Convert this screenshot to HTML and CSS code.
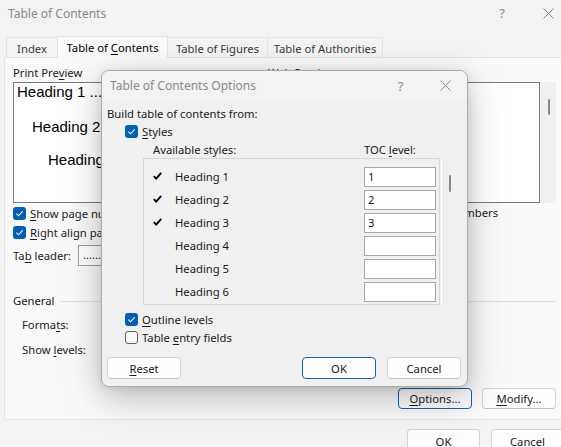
FILE: index.html
```html
<!DOCTYPE html>
<html lang="en">
<head>
<meta charset="utf-8">
<title>Table of Contents</title>
<link rel="stylesheet" href="styles.css">
</head>
<body>
<div class="win">
  <div class="titlebar">
    <span class="title">Table of Contents</span>
    <div class="caps">
      <span class="cap cap-help">?</span>
      <span class="cap cap-close"><svg width="11" height="11" viewBox="0 0 11 11"><path d="M0.5 0.5L10.5 10.5M10.5 0.5L0.5 10.5" stroke="#8a8a8a" stroke-width="1" fill="none"/></svg></span>
    </div>
  </div>
  <div class="tabs">
    <div class="tab t-index"><span>Index</span></div>
    <div class="tab t-toc active"><span>Table of <u>C</u>ontents</span></div>
    <div class="tab t-fig"><span>Table of Figures</span></div>
    <div class="tab t-auth"><span>Table of Authorities</span></div>
  </div>
  <div class="panel">
    <div class="previews">
      <div class="col col-print">
        <div class="label">Print Pre<u>v</u>iew</div>
        <div class="pbox">
          <div class="pl pl1">Heading 1 ..................................................... 1</div>
          <div class="pl pl2">Heading 2 ........................................... 3</div>
          <div class="pl pl3">Heading 3 ...................................... 5</div>
        </div>
        <div class="cb"><span class="box on"><svg width="13" height="13" viewBox="0 0 13 13"><path d="M3.4 6.7L5.5 8.8L9.7 4.3" stroke="#fff" stroke-width="1.1" fill="none"/></svg></span><span><u>S</u>how page numbers</span></div>
        <div class="cb"><span class="box on"><svg width="13" height="13" viewBox="0 0 13 13"><path d="M3.4 6.7L5.5 8.8L9.7 4.3" stroke="#fff" stroke-width="1.1" fill="none"/></svg></span><span><u>R</u>ight align page numbers</span></div>
        <div class="leader"><span class="leader-label">Ta<u>b</u> leader:</span><span class="select">...........</span></div>
      </div>
      <div class="col col-web">
        <div class="label"><u>W</u>eb Preview</div>
        <div class="wbox">
          <div class="wpane"></div>
          <div class="wscroll"><span class="wthumb"></span></div>
        </div>
        <div class="cb"><span class="box on"><svg width="13" height="13" viewBox="0 0 13 13"><path d="M3.4 6.7L5.5 8.8L9.7 4.3" stroke="#fff" stroke-width="1.1" fill="none"/></svg></span><span>Use <u>h</u>yperlinks instead of page numbers</span></div>
      </div>
    </div>
    <div class="general">
      <div class="ghead"><span>General</span><span class="gline"></span></div>
      <div class="grow grow1">Forma<u>t</u>s:</div>
      <div class="grow grow2">Show <u>l</u>evels:</div>
    </div>
    <div class="pbtns">
      <button class="btn def"><span><u>O</u>ptions...</span></button>
      <button class="btn"><span><u>M</u>odify...</span></button>
    </div>
  </div>
  <div class="footer">
    <button class="btn fbtn">OK</button>
    <button class="btn fbtn">Cancel</button>
  </div>
</div>

<div class="dlg">
  <div class="dtitle">
    <span class="title">Table of Contents Options</span>
    <div class="caps">
      <span class="cap dcap-help">?</span>
      <span class="cap dcap-close"><svg width="11" height="11" viewBox="0 0 11 11"><path d="M0.5 0.5L10.5 10.5M10.5 0.5L0.5 10.5" stroke="#8a8a8a" stroke-width="1" fill="none"/></svg></span>
    </div>
  </div>
  <div class="dbody">
    <div class="build">Build table of contents from:</div>
    <div class="cb dcb"><span class="box on"><svg width="13" height="13" viewBox="0 0 13 13"><path d="M3.4 6.7L5.5 8.8L9.7 4.3" stroke="#fff" stroke-width="1.1" fill="none"/></svg></span><span><u>S</u>tyles</span></div>
    <div class="lhead"><span class="lh-name">Available styles:</span><span>TOC <u>l</u>evel:</span></div>
    <div class="listwrap">
      <div class="list">
        <div class="row"><svg class="tick" width="9" height="8" viewBox="0 0 9 8"><path d="M0.8 4.2L3.2 6.6L8.2 0.8" stroke="#000" stroke-width="1.9" fill="none"/></svg><span>Heading 1</span><span class="lvl">1</span></div>
        <div class="row"><svg class="tick" width="9" height="8" viewBox="0 0 9 8"><path d="M0.8 4.2L3.2 6.6L8.2 0.8" stroke="#000" stroke-width="1.9" fill="none"/></svg><span>Heading 2</span><span class="lvl">2</span></div>
        <div class="row"><svg class="tick" width="9" height="8" viewBox="0 0 9 8"><path d="M0.8 4.2L3.2 6.6L8.2 0.8" stroke="#000" stroke-width="1.9" fill="none"/></svg><span>Heading 3</span><span class="lvl">3</span></div>
        <div class="row"><span></span><span>Heading 4</span><span class="lvl"></span></div>
        <div class="row"><span></span><span>Heading 5</span><span class="lvl"></span></div>
        <div class="row"><span></span><span>Heading 6</span><span class="lvl"></span></div>
      </div>
      <div class="lscroll"><span class="lthumb"></span></div>
    </div>
    <div class="cb dcb dcb-outline"><span class="box on"><svg width="13" height="13" viewBox="0 0 13 13"><path d="M3.4 6.7L5.5 8.8L9.7 4.3" stroke="#fff" stroke-width="1.1" fill="none"/></svg></span><span><u>O</u>utline levels</span></div>
    <div class="cb dcb"><span class="box off"></span><span>Table <u>e</u>ntry fields</span></div>
    <div class="dbtns">
      <button class="btn"><span><u>R</u>eset</span></button>
      <span class="spacer"></span>
      <button class="btn def">OK</button>
      <button class="btn">Cancel</button>
    </div>
  </div>
</div>
</body>
</html>
```

FILE: styles.css
```css
* { box-sizing: border-box; margin: 0; padding: 0; }
html, body { width: 561px; height: 447px; overflow: hidden; }
body {
  background: #f3f3f3;
  font-family: "Noto Sans", "Open Sans", sans-serif;
  font-size: 11.25px;
  color: #1a1a1a;
  position: relative;
}
u { text-decoration: underline; text-underline-offset: 2px; text-decoration-thickness: 1px; }

.win { width: 571px; }

.titlebar {
  height: 26px;
  display: flex;
  align-items: center;
  justify-content: space-between;
  padding-left: 8px;
}
.title { color: #8a8a8a; font-size: 12px; }
.caps { display: flex; align-self: stretch; }
.cap { display: flex; align-items: center; justify-content: center; color: #8a8a8a; }
.cap-help { width: 46px; font-size: 13px; }
.cap-close { width: 46px; }

.tabs {
  margin-top: 10px;
  height: 22px;
  display: flex;
  align-items: flex-end;
  padding-left: 6px;
}
.tab {
  height: 21px;
  display: flex;
  align-items: center;
  justify-content: center;
  border: 1px solid #e3e3e3;
  border-bottom: none;
  color: #3a3a3a;
  background: #f3f3f3;
  white-space: nowrap;
}
.t-index { width: 51px; border-right: none; }
.t-toc { width: 111px; }
.t-fig { width: 100px; border-left: none; }
.t-auth { width: 115px; border-left: none; }
.tab.active {
  height: 22px;
  background: #f9f9f9;
  color: #000;
  position: relative;
  z-index: 2;
  padding-bottom: 1px;
}

.panel {
  position: relative;
  z-index: 1;
  margin: -1px 4px 0 4px;
  background: #f9f9f9;
  border: 1px solid #e3e3e3;
  padding: 7px 10px 9px 8px;
  height: 363px;
}
.previews { display: flex; }
.col-print { width: 249px; }
.col-web { margin-left: 6px; flex: 1; }
.label { line-height: 16px; height: 16px; }
.pbox {
  margin-top: 1px;
  height: 121px;
  background: #fff;
  border: 1px solid #7a7a7a;
  overflow: hidden;
  font-family: "Liberation Sans", Arial, sans-serif;
  font-size: 15px;
  color: #000;
}
.pl { white-space: nowrap; line-height: 17px; }
.pl1 { margin-left: 3px; }
.pl2 { margin-left: 18px; margin-top: 18px; }
.pl3 { margin-left: 34px; margin-top: 16px; }

.cb { display: flex; align-items: center; height: 19px; gap: 4px; white-space: nowrap; }
.pbox + .cb { margin-top: 1px; }
.box { width: 13px; height: 13px; border-radius: 3px; display: block; flex: none; }
.box svg { display: block; }
.box.on { background: #005fb8; }
.box.off { border: 1px solid #5f5f5f; background: #f7f7f7; }

.leader { display: flex; align-items: center; margin-top: 3px; height: 21px; }
.leader-label { width: 65px; }
.select {
  width: 110px;
  height: 21px;
  background: #fff;
  border: 1px solid #9a9a9a;
  padding-left: 4px;
  line-height: 17px;
}

.wbox { margin-top: 1px; height: 121px; display: flex; }
.wpane { width: 272px; background: #fff; border: 1px solid #7a7a7a; }
.wscroll { flex: 1; background: #f0f0f0; padding: 17px 0 0 8px; }
.wthumb { display: block; width: 2px; height: 16px; background: #8a8a8a; border-radius: 1px; }

.general { margin-top: 27px; }
.ghead { display: flex; align-items: center; line-height: 16px; height: 16px; }
.gline { flex: 1; height: 1px; background: #dedede; margin-left: 6px; }
.grow { line-height: 16px; margin-left: 9px; }
.grow1 { margin-top: 8px; }
.grow2 { margin-top: 9px; }

.btn {
  font: inherit;
  color: #1a1a1a;
  background: #fdfdfd;
  border: 1px solid #d2d2d2;
  border-bottom-color: #c2c2c2;
  border-radius: 4px;
  width: 74px;
  height: 21px;
  display: flex;
  align-items: center;
  justify-content: center;
}
.btn.def { border: 1px solid #0f66b9; }
.pbtns { margin-top: 30px; display: flex; justify-content: flex-end; gap: 10px; }

.footer { margin-top: 9px; display: flex; justify-content: flex-end; gap: 11px; padding-right: 7px; }
.fbtn { width: 73px; height: 24px; }

/* Options dialog overlay */
.dlg {
  position: absolute;
  left: 101px;
  top: 70px;
  width: 367px;
  height: 317px;
  background: #f0f0f0;
  border: 1px solid #ababab;
  border-radius: 8px;
  overflow: hidden;
  box-shadow: 0 10px 36px rgba(0,0,0,0.26), 0 2px 8px rgba(0,0,0,0.10);
  z-index: 10;
}
.dtitle {
  height: 29px;
  display: flex;
  align-items: center;
  justify-content: space-between;
  padding-left: 8px;
  background: #f3f3f3;
}
.dcap-help { width: 45px; font-size: 13px; }
.dcap-close { width: 44px; }
.dbody { padding: 6px 6px 0 5px; }
.build { line-height: 16px; height: 16px; }
.dcb { height: 18px; margin-left: 18px; }
.lhead { display: flex; margin-top: 2px; margin-left: 46px; line-height: 16px; height: 16px; }
.lh-name { width: 211px; }
.listwrap { display: flex; margin-left: 36px; height: 147px; }
.list { width: 301px; border: 1px solid #d6d6d6; padding: 6px 0 0 9px; }
.row { display: grid; grid-template-columns: 22px 189px 72px; height: 23px; align-items: center; }
.tick { display: block; margin-top: -2px; }
.lvl {
  display: block;
  height: 20px;
  background: #fff;
  border: 1px solid #a9a9a9;
  padding-left: 3px;
  line-height: 18px;
}
.lscroll { width: 20px; margin-left: 1px; border-left: 1px solid #ffffff; padding: 17px 0 0 7px; }
.lthumb { display: block; width: 2px; height: 17px; background: #8a8a8a; border-radius: 1px; }
.dcb-outline { margin-top: 5px; }
.dbtns { display: flex; margin-top: 11px; gap: 11px; }
.dbtns .btn { width: 74px; height: 22px; }
.spacer { flex: 1; }
```
